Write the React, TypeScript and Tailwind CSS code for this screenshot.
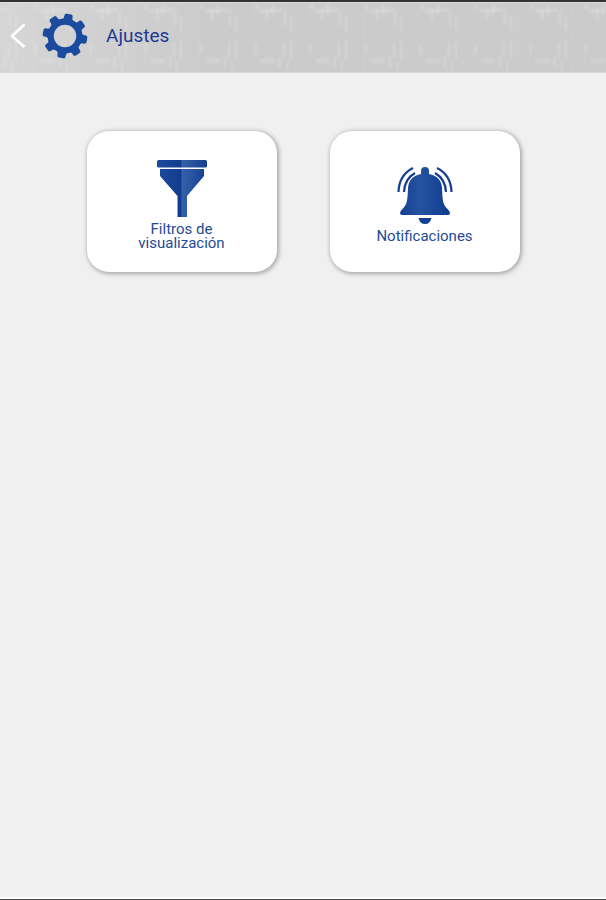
import type { ReactNode } from "react";

const GEAR_TEETH = [10, 55, 100, 145, 190, 235, 280, 325];

function BrushedTexture() {
  return (
    <svg className="absolute inset-0 h-full w-full" aria-hidden="true">
      <defs>
        <filter id="soften" x="0" y="0" width="100%" height="100%">
          <feGaussianBlur stdDeviation="1 1.800" />
        </filter>
        <pattern id="brushed" width="55" height="70" patternUnits="userSpaceOnUse">
          <g stroke="#ffffff" strokeLinecap="round" fill="none">
            <path d="M10 8v14M16 14v14M47 8v9M53 2v8M37 1v5" strokeWidth="2" strokeOpacity=".2" />
            <path d="M9 40v14M16 38v18M36 42v8M12 60v7M5 54v10" strokeWidth="2" strokeOpacity=".2" />
            <path d="M0 7h7M41 8h14M42 58h13" strokeWidth="3" strokeOpacity=".2" />
            <path d="M22 0v70M34 0v70" strokeWidth="1" strokeOpacity=".08" />
          </g>
        </pattern>
        <linearGradient id="sheen" x1="0" x2="1" y1="0" y2="0">
          <stop offset="0" stopColor="#ffffff" stopOpacity=".2" />
          <stop offset=".35" stopColor="#ffffff" stopOpacity="0" />
        </linearGradient>
      </defs>
      <rect width="100%" height="100%" fill="url(#brushed)" filter="url(#soften)" />
      <rect width="100%" height="100%" fill="url(#sheen)" />
    </svg>
  );
}

function BackIcon() {
  return (
    <svg width="16" height="26" viewBox="0 0 16 26" fill="none" aria-hidden="true">
      <path d="M14.5 1.5 2 13l12.500 11" stroke="#ffffff" strokeWidth="2.600" />
    </svg>
  );
}

function GearIcon() {
  return (
    <svg width="46" height="46" viewBox="-23 -23 46 46" aria-hidden="true">
      <circle r="14.300" fill="none" stroke="#1b4b9f" strokeWidth="6.200" />
      {GEAR_TEETH.map((angle) => (
        <path
          key={angle}
          transform={`rotate(${angle})`}
          d="M-6-15.800Q-4-16.500-4.200-19Q-4.400-22.300-2.200-22.300H2.200Q4.400-22.300 4.200-19Q4-16.500 6-15.800L4-13H-4Z"
          fill="#1b4b9f"
        />
      ))}
    </svg>
  );
}

function FunnelIcon() {
  return (
    <svg width="50" height="57" viewBox="0 0 50 57" aria-hidden="true">
      <defs>
        <linearGradient id="funnel" x1="0" x2="50" y1="0" y2="0" gradientUnits="userSpaceOnUse">
          <stop offset="0" stopColor="#1c4a9c" />
          <stop offset=".48" stopColor="#123d8f" />
          <stop offset=".5" stopColor="#3561a9" />
          <stop offset="1" stopColor="#133e93" />
        </linearGradient>
      </defs>
      <rect width="50" height="7.600" rx="1.500" fill="url(#funnel)" />
      <path d="M3 9h44v7L30 36v21h-9.500V36L3 16Z" fill="url(#funnel)" />
    </svg>
  );
}

function BellIcon() {
  return (
    <svg width="56" height="57" viewBox="0 0 56 57" aria-hidden="true">
      <defs>
        <linearGradient id="bell" x1="0" x2="1" y1="0" y2="0">
          <stop offset="0" stopColor="#133f92" />
          <stop offset=".4" stopColor="#24539f" />
          <stop offset="1" stopColor="#103b90" />
        </linearGradient>
      </defs>
      <path
        d="M24 7V4Q24 0 28 0T32 4V7Q44 9 45 21C45.500 34 46 38 51 42.500Q53 44.500 53 46Q53 48 51 48H5Q3 48 3 46Q3 44.500 5 42.500C10 38 10.500 34 11 21Q12 9 24 7Z"
        fill="url(#bell)"
      />
      <path d="M21.500 51h13Q33 57 28 57T21.500 51Z" fill="#123f94" />
      <path
        d="M16 1Q2 8 1.500 25M18 6Q7.500 12 7 25M40 1Q54 8 54.500 25M38 6Q48.500 12 49 25"
        fill="none"
        stroke="#173f91"
        strokeWidth="2.200"
      />
    </svg>
  );
}

function SettingsCard({ icon, children }: { icon: ReactNode; children: ReactNode }) {
  return (
    <button
      type="button"
      className="flex h-[141px] w-[190px] flex-col items-center justify-center gap-[5px] rounded-[22px] bg-white pt-[7px] text-[15px] leading-[14px] text-[#254a96] shadow-[1px_1px_4px_1px_rgba(0,0,0,0.3)]"
    >
      {icon}
      <span>{children}</span>
    </button>
  );
}

export default function App() {
  return (
    <div className="flex min-h-screen flex-col border-t-2 border-b border-t-[#333233] border-b-[#4b494b] bg-[#f0f0f0] font-['Roboto','Liberation_Sans',sans-serif]">
      <header className="relative h-[71px] border-t border-b border-t-[#dedede] border-b-[#d8d8d8] bg-[#cbcbcb]">
        <BrushedTexture />
        <div className="relative flex h-full items-center pb-1 pl-[10px] text-[#1c3994]">
          <button type="button" aria-label="Volver">
            <BackIcon />
          </button>
          <div className="ml-4 flex items-center gap-[18px]">
            <GearIcon />
            <h1 className="text-[19px] leading-6">Ajustes</h1>
          </div>
        </div>
      </header>
      <main className="flex flex-1 flex-wrap content-start justify-center gap-[53px] border-b-2 border-white pt-[58px]">
        <SettingsCard icon={<FunnelIcon />}>
          Filtros de
          <br />
          visualización
        </SettingsCard>
        <SettingsCard icon={<BellIcon />}>Notificaciones</SettingsCard>
      </main>
    </div>
  );
}
